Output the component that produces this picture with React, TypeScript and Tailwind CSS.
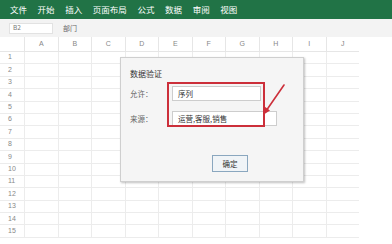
const menus = ["文件", "开始", "插入", "页面布局", "公式", "数据", "审阅", "视图"];
const cols = ["A", "B", "C", "D", "E", "F", "G", "H", "I", "J"];
const rows = Array.from({ length: 15 }, (_, i) => i + 1);

const font = { fontFamily: '"Noto Sans CJK SC", "Liberation Sans", sans-serif' };

export default function App() {
  return (
    <div className="relative w-[392px] h-[244px] overflow-hidden bg-white" style={font}>
      {/* 菜单栏 */}
      <div className="flex h-[19px] items-center gap-[10.6px] bg-[#217346] pl-[10px] text-[8.5px] text-white">
        {menus.map((m) => (
          <span key={m}>{m}</span>
        ))}
      </div>

      {/* 编辑栏 */}
      <div className="flex h-[18px] items-center bg-[#f3f3f3] pl-[9px]">
        <div className="flex h-[11px] w-[44px] items-center border border-[#e2e2e2] bg-white pl-[3px] text-[6.5px] text-[#777]">
          B2
        </div>
        <span className="ml-[10px] text-[7px] text-[#666]">部门</span>
      </div>

      {/* 表格 */}
      <div className="grid grid-cols-[24px_repeat(10,33.5px)] text-[7px] text-[#888]">
        <div className="h-[15px] border-b border-[#e6e6e6]" />
        {cols.map((c) => (
          <div
            key={c}
            className="flex h-[15px] items-center justify-center border-b border-l border-[#e6e6e6]"
            style={{ fontFamily: '"Liberation Sans", sans-serif' }}
          >
            {c}
          </div>
        ))}
        {rows.map((r) => (
          <div key={r} className="contents">
            <div
              className="flex h-[12.4px] items-center pl-[8px] border-b border-[#ececec]"
              style={{ fontFamily: '"Liberation Sans", sans-serif' }}
            >
              {r}
            </div>
            {cols.map((c) => (
              <div key={c} className="h-[12.4px] border-b border-l border-[#ececec]" />
            ))}
          </div>
        ))}
      </div>

      {/* 数据验证对话框 */}
      <div className="absolute left-[120px] top-[57px] h-[125px] w-[184px] border border-[#cfcfcf] bg-[#f5f5f5] pl-[9px] pt-[10px] shadow-[1px_1px_2px_rgba(0,0,0,0.25)]">
        <div className="text-[8px] leading-[12px] text-[#333]">数据验证</div>
        <div className="mt-[6px] flex items-center">
          <span className="w-[42px] text-[7.5px] text-[#666]">允许：</span>
          <div className="flex h-[15px] w-[89px] items-center border border-[#cdcdcd] bg-white pl-[5px] text-[7.5px] text-[#333]">
            序列
          </div>
        </div>
        <div className="mt-[10px] flex items-center">
          <span className="w-[42px] text-[7.5px] text-[#666]">来源：</span>
          <div className="flex h-[15px] w-[105px] items-center border border-[#cdcdcd] bg-white pl-[5px] text-[7.5px] text-[#333]">
            运营,客服,销售
          </div>
        </div>
        <div className="mt-[29px] ml-[82px] flex h-[17px] w-[36px] items-center justify-center border border-[#8aa7bf] bg-[#f0f4f7] text-[7.5px] text-[#333]">
          确定
        </div>

        {/* 红色标注 */}
        <div className="absolute left-[46px] top-[24px] h-[45px] w-[98px] border-2 border-[#cc2f3a]" />
        <svg className="absolute left-[138px] top-[24px]" width="30" height="36" viewBox="0 0 30 36">
          <line x1="25" y1="3" x2="7" y2="29" stroke="#cc2f3a" strokeWidth="1.6" strokeLinecap="round" />
          <path d="M4 33 L5.5 24.5 L11 28.5 Z" fill="#cc2f3a" />
        </svg>
      </div>
    </div>
  );
}
